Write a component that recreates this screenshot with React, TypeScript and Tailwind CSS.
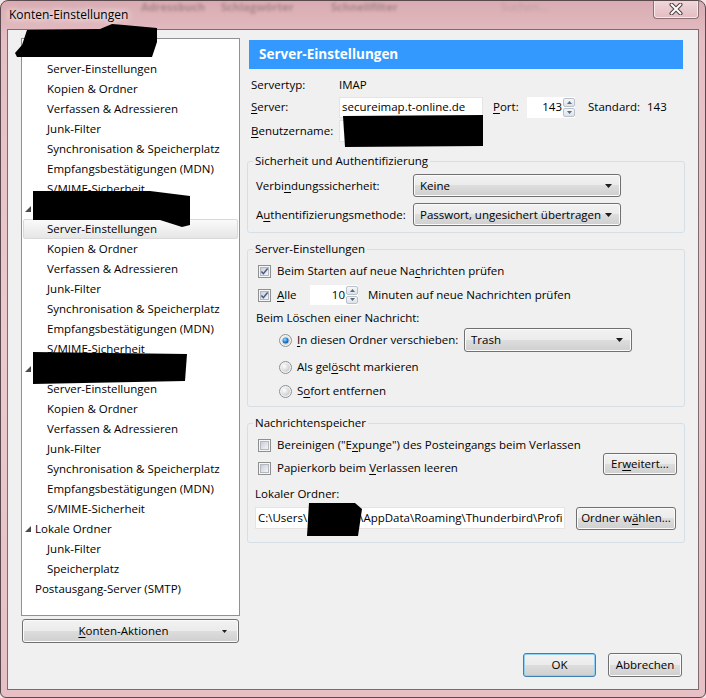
import React from "react";

const U = ({ children }: { children: React.ReactNode }) => (
  <span className="underline underline-offset-[2px] decoration-[1px]">{children}</span>
);

const btn =
  "rounded-[3px] border border-[#707070] bg-[linear-gradient(#f2f2f2,#ebebeb_50%,#dddddd_50%,#cfcfcf)] shadow-[inset_0_0_0_1px_#fbfbfb] flex items-center";

function Arrow() {
  return (
    <svg width="7" height="4" viewBox="0 0 7 4" className="shrink-0">
      <polygon points="0,0 7,0 3.5,4" fill="#1c1c1c" />
    </svg>
  );
}

function Dropdown({ text, className }: { text: string; className: string }) {
  return (
    <div className={`${btn} justify-between pl-[6px] pr-[8px] ${className}`}>
      <span className="whitespace-nowrap">{text}</span>
      <Arrow />
    </div>
  );
}

function Checkbox({ checked }: { checked?: boolean }) {
  return (
    <svg width="13" height="13" viewBox="0 0 13 13" className="shrink-0">
      <defs>
        <linearGradient id="cbg" x1="0" y1="0" x2="1" y2="1">
          <stop offset="0" stopColor="#c6cbd2" />
          <stop offset="1" stopColor="#f8f8f8" />
        </linearGradient>
      </defs>
      <rect x="0.5" y="0.5" width="12" height="12" fill="#f6f6f6" stroke="#8e8f8f" />
      <rect x="2.5" y="2.5" width="8" height="8" fill="url(#cbg)" stroke="#b3b8bf" />
      {checked && (
        <path d="M3.4 6.4 L5.4 8.7 L9.6 3.6" fill="none" stroke="#46598f" strokeWidth="1.5" />
      )}
    </svg>
  );
}

function Radio({ checked }: { checked?: boolean }) {
  return (
    <svg width="13" height="13" viewBox="0 0 13 13" className="shrink-0">
      <defs>
        <radialGradient id="rbg" cx="0.35" cy="0.35" r="0.75">
          <stop offset="0" stopColor="#ffffff" />
          <stop offset="1" stopColor="#c3c7cd" />
        </radialGradient>
        <radialGradient id="rdot" cx="0.4" cy="0.35" r="0.7">
          <stop offset="0" stopColor="#9fdcff" />
          <stop offset="0.55" stopColor="#2a86d6" />
          <stop offset="1" stopColor="#0d4e8c" />
        </radialGradient>
      </defs>
      <circle cx="6.5" cy="6.5" r="6" fill="#f3f3f3" stroke="#8e8f8f" />
      <circle cx="6.5" cy="6.5" r="4.3" fill="url(#rbg)" />
      {checked && <circle cx="6.5" cy="6.5" r="3" fill="url(#rdot)" />}
    </svg>
  );
}

function Spin({ value, className }: { value: string; className: string }) {
  return (
    <div className={`bg-white flex items-stretch ${className}`}>
      <div className="flex-1 flex items-center justify-end pr-[1px]">{value}</div>
      <div className="w-[12px] flex flex-col gap-[1px] py-[1px]">
        <div className="flex-1 rounded-[2px] border border-[#b9c1ca] bg-[linear-gradient(#f5f7f9,#dce2e9)] flex items-center justify-center">
          <svg width="5" height="3" viewBox="0 0 5 3">
            <polygon points="0,3 5,3 2.5,0" fill="#5f6b78" />
          </svg>
        </div>
        <div className="flex-1 rounded-[2px] border border-[#b9c1ca] bg-[linear-gradient(#f5f7f9,#dce2e9)] flex items-center justify-center">
          <svg width="5" height="3" viewBox="0 0 5 3">
            <polygon points="0,0 5,0 2.5,3" fill="#5f6b78" />
          </svg>
        </div>
      </div>
    </div>
  );
}

function Tri() {
  return (
    <svg width="6" height="6" viewBox="0 0 6 6" className="shrink-0">
      <polygon points="6,0 6,6 0,6" fill="#4a4a4a" />
    </svg>
  );
}

type Row = { label: string; level: 0 | 1; tri?: boolean; sel?: boolean };

const accountChildren = [
  "Server-Einstellungen",
  "Kopien & Ordner",
  "Verfassen & Adressieren",
  "Junk-Filter",
  "Synchronisation & Speicherplatz",
  "Empfangsbestätigungen (MDN)",
  "S/MIME-Sicherheit",
];

const rows: Row[] = [
  { label: "", level: 0, tri: true },
  ...accountChildren.map((l) => ({ label: l, level: 1 as const })),
  { label: "", level: 0, tri: true },
  ...accountChildren.map((l, i) => ({ label: l, level: 1 as const, sel: i === 0 })),
  { label: "", level: 0, tri: true },
  ...accountChildren.map((l) => ({ label: l, level: 1 as const })),
  { label: "Lokale Ordner", level: 0, tri: true },
  { label: "Junk-Filter", level: 1 },
  { label: "Speicherplatz", level: 1 },
  { label: "Postausgang-Server (SMTP)", level: 0 },
];

function Tree() {
  return (
    <div className="w-[219px] h-[578px] border border-[#8e9196] bg-white flex flex-col">
      {rows.map((r, i) => {
        if (r.level === 1) {
          return (
            <div
              key={i}
              className={
                r.sel
                  ? "h-[20px] mx-[1px] flex items-center pl-[23px] rounded-[2px] border border-[#d9d9d9] bg-[linear-gradient(#fafafa,#e6e6e6)] whitespace-nowrap"
                  : "h-[20px] flex items-center pl-[25px] whitespace-nowrap"
              }
            >
              {r.label}
            </div>
          );
        }
        return (
          <div key={i} className="h-[20px] flex items-center pl-[3px] whitespace-nowrap">
            {r.tri ? <Tri /> : <span className="w-[6px] shrink-0" />}
            <span className="ml-[4px]">{r.label}</span>
          </div>
        );
      })}
    </div>
  );
}

export default function App() {
  return (
    <div className="w-[706px] h-[698px] bg-[#f3e3e5] font-['Open_Sans',sans-serif] text-[11.5px] text-black leading-normal">
      <div className="relative w-[706px] h-[698px] rounded-t-[8px] rounded-b-[6px] border border-[#5a4a4d] bg-[linear-gradient(180deg,#d8acb2,#e6bfc4_6%,#ebcace_50%,#e6c0c5)] flex flex-col overflow-hidden">
        {/* blurred content behind the glass */}
        <div className="absolute left-[140px] top-[0px] flex items-center text-[11px] font-bold text-[#6b5558] opacity-45 blur-[1.4px] whitespace-nowrap leading-[12px]">
          <span className="w-[80px]">Adressbuch</span>
          <span className="w-[110px]">Schlagwörter</span>
          <span className="w-[170px]">Schnellfilter</span>
          <span className="font-normal text-[#9b8589]">Suchen...</span>
        </div>

        {/* title bar */}
        <div className="relative h-[28px] shrink-0 flex items-center pl-[8px] text-[12px] text-black [text-shadow:0_0_6px_#ffffff,0_0_10px_#ffffff]">
          Konten-Einstellungen
          <div className="absolute right-[6px] top-[-1px] w-[46px] h-[19px] rounded-b-[4px] border border-t-0 border-[#8b7073] bg-[linear-gradient(#f0d8db,#e3bcc1)] shadow-[inset_0_0_0_1px_#f7e8ea] flex items-center justify-center">
            <svg width="14" height="12" viewBox="0 0 14 12">
              <path d="M2.5 1.5 L11.5 10.5 M11.5 1.5 L2.5 10.5" stroke="#4f3f42" strokeWidth="4" strokeLinecap="round" />
              <path d="M2.5 1.5 L11.5 10.5 M11.5 1.5 L2.5 10.5" stroke="#ffffff" strokeWidth="2" strokeLinecap="round" />
            </svg>
          </div>
        </div>

        {/* client area */}
        <div className="mx-[6px] h-[661px] shrink-0 border border-[#7d6c6f] bg-[#f0f0f0] flex flex-col pt-[8px] pl-[13px]">
          <div className="flex gap-[8px] h-[605px]">
            {/* left column */}
            <div className="w-[219px] flex flex-col">
              <Tree />
              <div className={`${btn} mt-[3px] h-[24px] w-[217px] ml-[1px] relative justify-center pr-[14px]`}>
                <span>
                  <U>K</U>onten-Aktionen
                </span>
                <svg width="5" height="3" viewBox="0 0 5 3" className="absolute right-[11px] top-[10px]">
                  <polygon points="0,0 5,0 2.5,3" fill="#1c1c1c" />
                </svg>
              </div>
            </div>

            {/* right column */}
            <div className="w-[438px] flex flex-col">
              <div className="mt-[2px] ml-[1px] w-[434px] h-[29px] shrink-0 bg-[#3399ff] text-white font-bold text-[13.5px] pl-[10px] flex items-center">
                Server-Einstellungen
              </div>

              <div className="mt-[6px] h-[20px] flex items-center pl-[3px]">
                <span className="w-[88px]">Servertyp:</span>
                <span>IMAP</span>
              </div>
              <div className="mt-[1px] h-[22px] flex items-center pl-[3px]">
                <span className="w-[88px]">
                  <U>S</U>erver:
                </span>
                <div className="w-[144px] h-[21px] bg-white border border-[#e4e4e4] pl-[2px] flex items-center whitespace-nowrap">
                  secureimap.t-online.de
                </div>
                <span className="ml-[10px] w-[34px]">
                  <U>P</U>ort:
                </span>
                <Spin value="143" className="w-[48px] h-[21px]" />
                <span className="ml-[13px] w-[59px]">Standard:</span>
                <span>143</span>
              </div>
              <div className="mt-[2px] h-[22px] flex items-center pl-[3px]">
                <span className="w-[88px]">
                  <U>B</U>enutzername:
                </span>
                <div className="w-[144px] h-[22px] bg-white border border-[#e4e4e4]" />
              </div>

              {/* group 1 */}
              <fieldset className="mt-[11px] ml-[-1px] w-[438px] border border-[#d5dfe5] rounded-[3px] pt-[5px] pb-[6px] pl-[8px]">
                <legend className="px-[2px] ml-[-3px] leading-[16px]">Sicherheit und Authentifizierung</legend>
                <div className="flex items-center h-[23px]">
                  <span className="w-[157px]">
                    Verbi<U>n</U>dungssicherheit:
                  </span>
                  <Dropdown text="Keine" className="w-[208px] h-[23px]" />
                </div>
                <div className="flex items-center h-[23px] mt-[6px]">
                  <span className="w-[157px]">
                    A<U>u</U>thentifizierungsmethode:
                  </span>
                  <Dropdown text="Passwort, ungesichert übertragen" className="w-[208px] h-[23px]" />
                </div>
              </fieldset>

              {/* group 2 */}
              <fieldset className="mt-[8px] ml-[-1px] w-[438px] border border-[#d5dfe5] rounded-[3px] pt-[4px] pb-[5px] pl-[8px]">
                <legend className="px-[2px] ml-[-3px] leading-[16px]">Server-Einstellungen</legend>
                <div className="h-[20px] flex items-center ml-[2px] gap-[6px]">
                  <Checkbox checked />
                  <span>
                    Beim Starten auf neue Na<U>c</U>hrichten prüfen
                  </span>
                </div>
                <div className="mt-[3px] h-[22px] flex items-center ml-[2px]">
                  <Checkbox checked />
                  <span className="ml-[6px] w-[33px]">
                    <U>A</U>lle
                  </span>
                  <Spin value="10" className="w-[48px] h-[20px]" />
                  <span className="ml-[10px]">Minuten auf neue Nachrichten prüfen</span>
                </div>
                <div className="mt-[2px] h-[20px] flex items-center">Beim Löschen einer Nachricht:</div>
                <div className="h-[24px] flex items-center ml-[23px]">
                  <Radio checked />
                  <span className="ml-[5px] w-[167px]">
                    <U>I</U>n diesen Ordner verschieben:
                  </span>
                  <Dropdown text="Trash" className="w-[168px] h-[24px]" />
                </div>
                <div className="mt-[5px] h-[20px] flex items-center ml-[23px] gap-[5px]">
                  <Radio />
                  <span>
                    Als gel<U>ö</U>scht markieren
                  </span>
                </div>
                <div className="mt-[4px] h-[20px] flex items-center ml-[23px] gap-[5px]">
                  <Radio />
                  <span>
                    S<U>o</U>fort entfernen
                  </span>
                </div>
              </fieldset>

              {/* group 3 */}
              <fieldset className="mt-[8px] ml-[-1px] w-[438px] border border-[#d5dfe5] rounded-[3px] pt-[4px] pb-[12px] pl-[8px]">
                <legend className="px-[2px] ml-[-3px] leading-[16px]">Nachrichtenspeicher</legend>
                <div className="flex items-end">
                  <div className="flex flex-col ml-[2px]">
                    <div className="h-[20px] flex items-center gap-[6px]">
                      <Checkbox />
                      <span>
                        Bereinigen ("E<U>x</U>punge") des Posteingangs beim Verlassen
                      </span>
                    </div>
                    <div className="mt-[3px] h-[20px] flex items-center gap-[6px]">
                      <Checkbox />
                      <span>
                        Papierkorb beim <U>V</U>erlassen leeren
                      </span>
                    </div>
                  </div>
                  <div className={`${btn} ml-auto mr-[7px] mb-[3px] w-[74px] h-[22px] justify-center`}>
                    <span>
                      Er<U>w</U>eitert...
                    </span>
                  </div>
                </div>
                <div className="mt-[6px] h-[20px] flex items-center ml-[-1px]">Lokaler Ordner:</div>
                <div className="mt-[2px] h-[24px] flex items-center">
                  <div className="ml-[-1px] w-[310px] h-[22px] shrink-0 bg-white border border-[#e4e4e4] pl-[2px] pt-[2px] overflow-hidden">
                    <div className="w-[304px] overflow-hidden whitespace-nowrap leading-[16px]">
                      C:\Users\<span className="inline-block w-[52px]" />\AppData\Roaming\Thunderbird\Profiles
                    </div>
                  </div>
                  <div className={`${btn} ml-[11px] w-[100px] h-[23px] justify-center`}>
                    <span>
                      Ordner w<U>ä</U>hlen...
                    </span>
                  </div>
                </div>
              </fieldset>
            </div>
          </div>

          {/* bottom buttons */}
          <div className="mt-[10px] flex justify-end gap-[12px] pr-[16px]">
            <div className="w-[73px] h-[24px] rounded-[3px] border border-[#3c7fb1] bg-[linear-gradient(#f2f2f2,#ebebeb_50%,#dddddd_50%,#cfcfcf)] shadow-[inset_0_0_0_1px_#8fd0f3] flex items-center justify-center">
              OK
            </div>
            <div className={`${btn} w-[74px] h-[24px] justify-center`}>Abbrechen</div>
          </div>
        </div>

        {/* redaction marks */}
        <svg
          width="706"
          height="698"
          viewBox="0 0 706 698"
          className="absolute left-[-1px] top-[-1px] pointer-events-none"
        >
          <polygon points="27,30 100,29 112,24 124,25 157,28 157,42 152,57 17,57 15,53 22,45" fill="#000" />
          <polygon points="33,191 150,191 190,196 190,225 182,227 160,220 33,220" fill="#000" />
          <polygon points="33,352 187,354 185,381 33,384" fill="#000" />
          <polygon points="343,116 483,115 483,146 345,147" fill="#000" />
          <polygon points="309,503 355,503 362,509 358,536 307,536" fill="#000" />
        </svg>
      </div>
    </div>
  );
}
